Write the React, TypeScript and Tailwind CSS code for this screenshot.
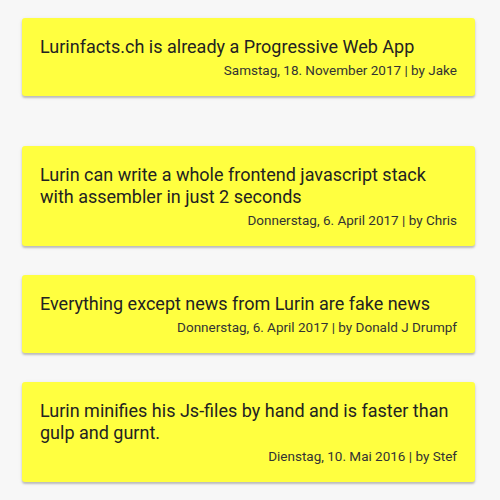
const facts = [
  { title: "Lurinfacts.ch is already a Progressive Web App", date: "Samstag, 18. November 2017", author: "Jake" },
  { title: "Lurin can write a whole frontend javascript stack with assembler in just 2 seconds", date: "Donnerstag, 6. April 2017", author: "Chris" },
  { title: "Everything except news from Lurin are fake news", date: "Donnerstag, 6. April 2017", author: "Donald J Drumpf" },
  { title: "Lurin minifies his Js-files by hand and is faster than gulp and gurnt.", date: "Dienstag, 10. Mai 2016", author: "Stef" },
];

function FactCard({ title, date, author }: { title: string; date: string; author: string }) {
  return (
    <article className="w-[453px] rounded-[3px] bg-[#ffff40] px-[18px] pt-[18px] pb-[16px] shadow-[0_2px_2px_rgba(0,0,0,0.2),0_1px_4px_rgba(0,0,0,0.08)]">
      <h2 className="text-[18px] leading-[22px] text-[#222]">{title}</h2>
      <p className="mt-[2px] text-right text-[13.5px] leading-[20px] text-[#333]">
        {date} | by {author}
      </p>
    </article>
  );
}

export default function App() {
  return (
    <main className="min-h-[500px] bg-[#f7f7f7] pl-[22px] pt-[18px] font-['Roboto',sans-serif]">
      <div className="mb-[50px]">
        <FactCard {...facts[0]} />
      </div>
      <div className="flex flex-col gap-[29px]">
        {facts.slice(1).map((f) => (
          <FactCard key={f.title} {...f} />
        ))}
      </div>
    </main>
  );
}
